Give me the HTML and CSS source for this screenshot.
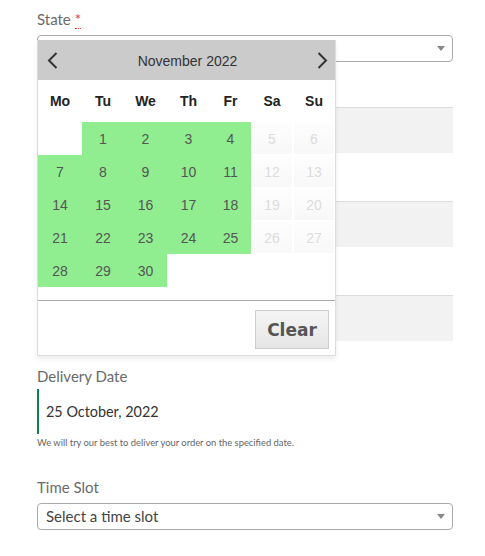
FILE: index.html
```html
<!DOCTYPE html>
<html>
<head>
<meta charset="utf-8">
<link rel="stylesheet" href="styles.css">
</head>
<body>
<div class="page">
  <div class="row row-select">
    <label class="label">State <abbr class="req" title="required">*</abbr></label>
    <div class="select"><span class="select-text"></span><span class="caret"></span></div>
  </div>
  <div class="row row-field">
    <div class="label spacer"></div>
    <div class="field"></div>
  </div>
  <div class="row row-field">
    <div class="label spacer"></div>
    <div class="field"></div>
  </div>
  <div class="row row-field last">
    <div class="label spacer"></div>
    <div class="field"></div>
  </div>
  <div class="row row-date">
    <label class="label label-tight">Delivery Date</label>
    <div class="date-input">25 October, 2022</div>
    <p class="help">We will try our best to deliver your order on the specified date.</p>
  </div>
  <div class="row row-select">
    <label class="label">Time Slot</label>
    <div class="select"><span class="select-text">Select a time slot</span><span class="caret"></span></div>
  </div>

  <div class="datepicker">
    <div class="dp-head">
      <svg class="chev" width="11" height="17" viewBox="0 0 11 17"><path d="M9.5 1 L2 8.5 L9.5 16" fill="none" stroke="#333" stroke-width="2"/></svg>
      <span class="dp-title">November 2022</span>
      <svg class="chev" width="11" height="17" viewBox="0 0 11 17"><path d="M1.5 1 L9 8.5 L1.5 16" fill="none" stroke="#333" stroke-width="2"/></svg>
    </div>
    <div class="dp-grid dp-week">
      <span>Mo</span><span>Tu</span><span>We</span><span>Th</span><span>Fr</span><span>Sa</span><span>Su</span>
    </div>
    <div class="dp-grid dp-days">
      <span class="empty"></span><span class="on">1</span><span class="on">2</span><span class="on">3</span><span class="on">4</span><span class="off">5</span><span class="off">6</span>
      <span class="on">7</span><span class="on">8</span><span class="on">9</span><span class="on">10</span><span class="on">11</span><span class="off">12</span><span class="off">13</span>
      <span class="on">14</span><span class="on">15</span><span class="on">16</span><span class="on">17</span><span class="on">18</span><span class="off">19</span><span class="off">20</span>
      <span class="on">21</span><span class="on">22</span><span class="on">23</span><span class="on">24</span><span class="on">25</span><span class="off">26</span><span class="off">27</span>
      <span class="on">28</span><span class="on">29</span><span class="on">30</span><span class="empty"></span><span class="empty"></span><span class="empty"></span><span class="empty"></span>
    </div>
    <div class="dp-foot">
      <button class="clear">Clear</button>
    </div>
  </div>
</div>
</body>
</html>
```

FILE: styles.css
```css
html, body {
  margin: 0;
  padding: 0;
  background: #fff;
}

.page {
  position: relative;
  padding: 7px 0 0 37px;
  width: 416px;
  font-family: Lato, "Liberation Sans", sans-serif;
}

.row {
  display: flex;
  flex-direction: column;
}

.label {
  display: block;
  height: 24px;
  line-height: 24px;
  font-size: 15px;
  color: #6a6a6a;
  margin-bottom: 4px;
}

.label-tight {
  margin-bottom: 1px;
}

.req {
  color: #e2401c;
  text-decoration: none;
  border-bottom: 1px dotted #e2401c;
  line-height: 1;
}

.row-select {
  margin-bottom: 17px;
}

.select {
  box-sizing: border-box;
  height: 27px;
  border: 1px solid #aaa;
  border-radius: 4px;
  background: #fff;
  display: flex;
  align-items: center;
  justify-content: space-between;
  padding: 0 7px 0 8px;
}

.select-text {
  font-size: 15px;
  color: #444;
  line-height: 25px;
}

.caret {
  width: 0;
  height: 0;
  border-left: 4px solid transparent;
  border-right: 4px solid transparent;
  border-top: 5px solid #888;
}

.row-field {
  margin-bottom: 20px;
}

.row-field.last {
  margin-bottom: 23px;
}

.field {
  box-sizing: border-box;
  height: 46px;
  background: #f2f2f2;
  border-top: 1px solid #dcdcdc;
}

.date-input {
  box-sizing: border-box;
  height: 45px;
  border-left: 2px solid #0f7f4f;
  padding-left: 7px;
  display: flex;
  align-items: center;
  font-size: 14.4px;
  color: #333;
}

.help {
  margin: 2px 0 25px 0;
  font-size: 9.4px;
  line-height: 14px;
  color: #666;
}

/* datepicker overlay */
.datepicker {
  position: absolute;
  left: 37px;
  top: 40px;
  width: 297px;
  background: #fff;
  border: 1px solid #ddd;
  border-top: 0;
  box-shadow: 0 3px 5px rgba(0, 0, 0, 0.08);
  font-family: "Liberation Sans", Arial, sans-serif;
  font-size: 14px;
}

.dp-head {
  height: 40px;
  background: #cbcbcb;
  display: flex;
  align-items: center;
  justify-content: space-between;
  padding: 1px 7px 0 9px;
  box-sizing: border-box;
}

.chev {
  display: block;
}

.dp-title {
  color: #333;
  font-size: 14px;
}

.dp-grid {
  display: grid;
  grid-template-columns: 44px 42px 43px 43px 41px 42px 42px;
}

.dp-week {
  height: 42px;
  align-items: center;
  text-align: center;
  font-weight: bold;
  color: #222;
}

.dp-days {
  grid-auto-rows: 33px;
  margin-bottom: 13px;
}

.dp-days span {
  display: flex;
  align-items: center;
  justify-content: center;
  color: #555;
}

.dp-days .on {
  background: #90ee90;
}

.dp-days .off {
  margin: 1px;
  background: linear-gradient(#fdfdfd, #f8f8f8);
  color: #dcdcdc;
}

.dp-foot {
  border-top: 1px solid #aaa;
  display: flex;
  justify-content: flex-end;
  padding: 9px 6px 6px 0;
}

.clear {
  box-sizing: border-box;
  width: 74px;
  height: 39px;
  border: 1px solid #cdcdcd;
  background: linear-gradient(#f5f5f5, #e6e6e6);
  font-family: "DejaVu Sans", Verdana, sans-serif;
  font-weight: bold;
  font-size: 17px;
  color: #555;
  padding: 0;
}
```
